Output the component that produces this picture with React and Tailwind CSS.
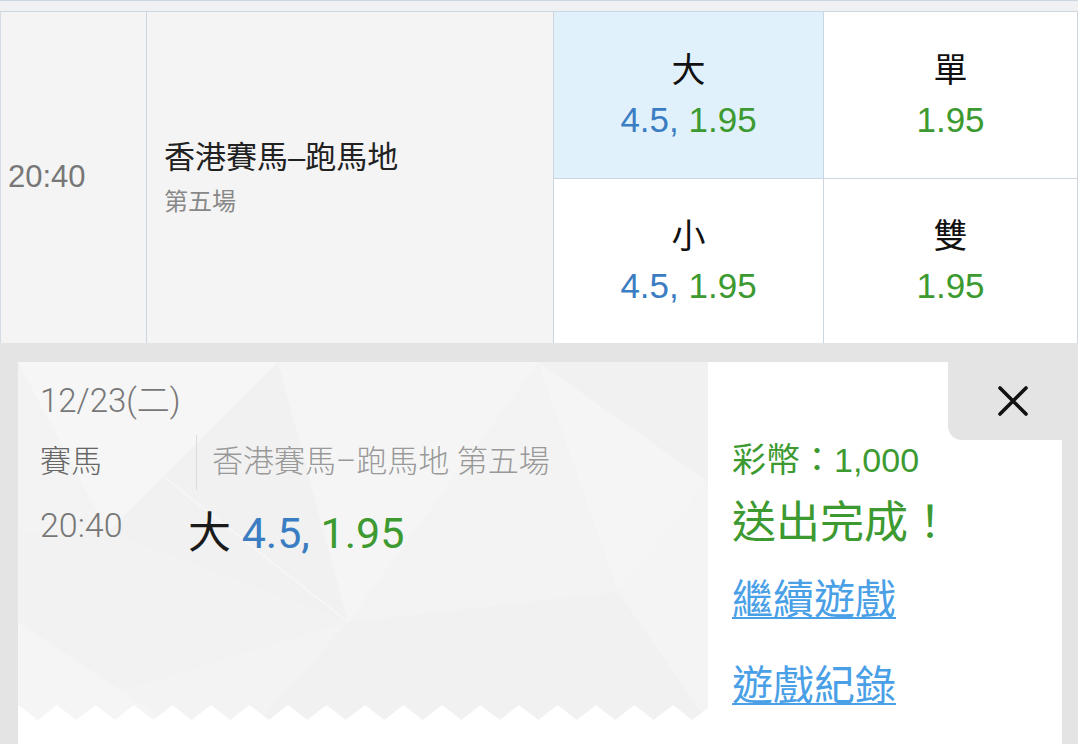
import React from "react";

const GREEN = "text-[#3c9a30]";
const BLUE = "text-[#3a7dc2]";

function OddsCell({ label, line, highlight, first }) {
  return (
    <div
      className={`flex flex-col items-center justify-center ${highlight ? "bg-[#e1f1fb]" : "bg-white"} ${first ? "" : "border-t border-[#cbd6e0]"}`}
    >
      <div className="text-[34px] leading-[50px] text-[#111]">{label}</div>
      <div className="text-[35px] leading-[50px]">{line}</div>
    </div>
  );
}

function TicketPattern() {
  return (
    <svg className="absolute inset-0" width="690" height="360" viewBox="0 0 690 360" preserveAspectRatio="none">
      <rect width="690" height="360" fill="#f3f3f3" />
      <polygon points="0,0 260,0 90,170" fill="#f6f6f6" />
      <polygon points="260,0 90,170 330,260" fill="#f1f1f1" />
      <polygon points="260,0 520,0 330,260" fill="#f5f5f5" />
      <polygon points="520,0 690,0 690,120" fill="#f1f1f1" />
      <polygon points="520,0 690,120 600,230" fill="#f5f5f5" />
      <polygon points="0,170 90,170 330,260 0,360" fill="#f2f2f2" />
      <polygon points="330,260 600,230 690,360 240,360" fill="#f1f1f1" />
      <polygon points="600,230 690,120 690,360" fill="#f4f4f4" />
      <polygon points="0,260 150,360 0,360" fill="#f5f5f5" />
      <line x1="0" y1="0" x2="330" y2="260" stroke="#f7f7f7" strokeWidth="1.5" />
    </svg>
  );
}

function Zigzag() {
  const pts = [];
  for (let x = -18.75; x < 720; x += 38.5) {
    pts.push(`${x.toFixed(2)},15`, `${(x + 19.25).toFixed(2)},0`);
  }
  pts.push("720,15");
  return (
    <svg className="absolute left-0 bottom-0" width="690" height="15" viewBox="0 0 690 15">
      <polygon points={pts.join(" ")} fill="#ffffff" />
    </svg>
  );
}

export default function App() {
  return (
    <div className="w-[1080px] h-[744px] overflow-hidden bg-white font-['Liberation_Sans','Noto_Sans_CJK_TC',sans-serif]">
      <div className="w-[1078px] h-[744px] flex flex-col">
        {/* top strip */}
        <div className="h-[12px] shrink-0 bg-[#eff1f3] border-t border-b border-[#cbd6e0]" />
        {/* main row */}
        <div className="flex h-[331px] shrink-0">
          <div className="w-[146px] bg-[#f4f4f4] border-l border-[#d5dce3] flex items-center pl-[7px] text-[31px] text-[#777]">
            20:40
          </div>
          <div className="w-[407px] bg-[#f4f4f4] border-l border-[#cbd6e0] flex flex-col justify-center pl-[17px]">
            <div className="text-[31px] leading-[40px] text-[#222]">香港賽馬–跑馬地</div>
            <div className="mt-2 text-[24px] leading-[32px] text-[#888]">第五場</div>
          </div>
          <div className="w-[270px] border-l border-[#cbd6e0] grid grid-rows-2">
            <OddsCell
              first
              highlight
              label="大"
              line={
                <>
                  <span className={BLUE}>4.5, </span>
                  <span className={GREEN}>1.95</span>
                </>
              }
            />
            <OddsCell
              label="小"
              line={
                <>
                  <span className={BLUE}>4.5, </span>
                  <span className={GREEN}>1.95</span>
                </>
              }
            />
          </div>
          <div className="w-[255px] border-l border-r border-[#cbd6e0] grid grid-rows-2">
            <OddsCell first label="單" line={<span className={GREEN}>1.95</span>} />
            <OddsCell label="雙" line={<span className={GREEN}>1.95</span>} />
          </div>
        </div>
        {/* bottom area */}
        <div className="flex-1 bg-[#e4e4e4] pt-[19px] pl-[18px] pr-[16px]">
          <div className="flex h-full">
            {/* ticket */}
            <div className="w-[690px] h-full bg-white relative">
              <div className="relative h-[358px] overflow-hidden">
                <TicketPattern />
                <Zigzag />
                <div className="relative pl-[22px] pt-[19px] font-['Roboto','Noto_Sans_CJK_TC',sans-serif] font-light">
                  <div className="text-[33px] leading-[40px] text-[#777]">12/23(二)</div>
                  <div className="mt-[14px] flex items-center h-[55px]">
                    <div className="w-[156px] text-[31px] text-[#666]">賽馬</div>
                    <div className="h-full border-l border-[#dcdcdc] pl-[15px] flex items-center text-[31px] text-[#999]">
                      香港賽馬–跑馬地 第五場
                    </div>
                  </div>
                  <div className="mt-[15px] flex items-start">
                    <div className="w-[148px] text-[34px] leading-[40px] text-[#777]">20:40</div>
                    <div className="text-[43px] leading-[56px] font-normal">
                      <span className="text-[#1a1a1a]">大 </span>
                      <span className={BLUE}>4.5, </span>
                      <span className={GREEN}>1.95</span>
                    </div>
                  </div>
                </div>
              </div>
            </div>
            {/* right */}
            <div className="flex-1 bg-white flex flex-col">
              <div className="flex h-[78px] shrink-0">
                <div className="flex-1" />
                <div className="w-[114px] bg-[#e4e4e4] rounded-bl-[14px] flex items-center justify-center pl-[16px]">
                  <svg width="30" height="30" viewBox="0 0 30 30">
                    <path d="M2 2 L28 28 M28 2 L2 28" stroke="#111" strokeWidth="3.6" strokeLinecap="round" />
                  </svg>
                </div>
              </div>
              <div className="pl-[24px] flex flex-col items-start">
                <div className={`text-[34px] leading-[40px] ${GREEN}`}>彩幣：1,000</div>
                <div className={`mt-[18px] text-[44px] leading-[50px] ${GREEN}`}>送出完成！</div>
                <div className="mt-[27px] text-[41px] leading-[50px] text-[#4aa0e6] underline underline-offset-[3px] decoration-[2px]">
                  繼續遊戲
                </div>
                <div className="mt-[36px] text-[41px] leading-[50px] text-[#4aa0e6] underline underline-offset-[3px] decoration-[2px]">
                  遊戲紀錄
                </div>
              </div>
            </div>
          </div>
        </div>
      </div>
    </div>
  );
}
